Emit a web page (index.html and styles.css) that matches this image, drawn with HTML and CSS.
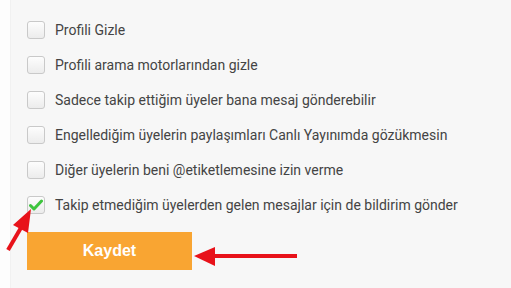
FILE: index.html
```html
<!DOCTYPE html>
<html>
<head>
<meta charset="utf-8">
<link rel="stylesheet" href="styles.css">
</head>
<body>
<div class="page">
  <form class="privacy">
    <label class="opt"><span class="box"></span>Profili Gizle</label>
    <label class="opt"><span class="box"></span>Profili arama motorlarından gizle</label>
    <label class="opt"><span class="box"></span>Sadece takip ettiğim üyeler bana mesaj gönderebilir</label>
    <label class="opt"><span class="box"></span>Engellediğim üyelerin paylaşımları Canlı Yayınımda gözükmesin</label>
    <label class="opt"><span class="box"></span>Diğer üyelerin beni @etiketlemesine izin verme</label>
    <label class="opt"><span class="box checked">
      <svg width="14" height="12" viewBox="0 0 14 12"><path d="M1.5 6.5 L5 10 L12.5 2" fill="none" stroke="#3ec43e" stroke-width="3" stroke-linecap="round" stroke-linejoin="round"/></svg>
    </span>Takip etmediğim üyelerden gelen mesajlar için de bildirim gönder</label>
    <button type="button" class="save">Kaydet</button>
  </form>
</div>
<svg class="marks" width="511" height="288" viewBox="0 0 511 288">
  <line x1="8" y1="250" x2="22" y2="226" stroke="#e8121a" stroke-width="4"/>
  <polygon points="31,209 13,225 28,233" fill="#e8121a"/>
  <line x1="297" y1="256" x2="212" y2="256" stroke="#e8121a" stroke-width="4"/>
  <polygon points="194,256 215,247 215,266" fill="#e8121a"/>
</svg>
</body>
</html>
```

FILE: styles.css
```css
body {
  margin: 0;
  background: #fdfdfd;
  font-family: Roboto, "Liberation Sans", sans-serif;
}

.page {
  margin-left: 10px;
  height: 288px;
  background: #f7f7f7;
  border-left: 1px solid #f1f1f1;
}

.privacy {
  display: flex;
  flex-direction: column;
  padding: 12px 0 0 16px;
}

.opt {
  display: flex;
  align-items: center;
  gap: 10px;
  height: 35px;
  font-size: 14px;
  color: #444;
}

.box {
  width: 16px;
  height: 16px;
  border: 1px solid #c9c9c9;
  border-radius: 3px;
  background: linear-gradient(#fdfdfd, #ececec);
  display: flex;
  align-items: center;
  justify-content: center;
}

.save {
  margin-top: 10px;
  width: 165px;
  height: 38px;
  border: 0;
  background: #f9a532;
  color: #fff;
  font-family: "Liberation Sans", Arial, sans-serif;
  font-weight: bold;
  font-size: 16px;
}

.marks {
  position: absolute;
  left: 0;
  top: 0;
}
```
